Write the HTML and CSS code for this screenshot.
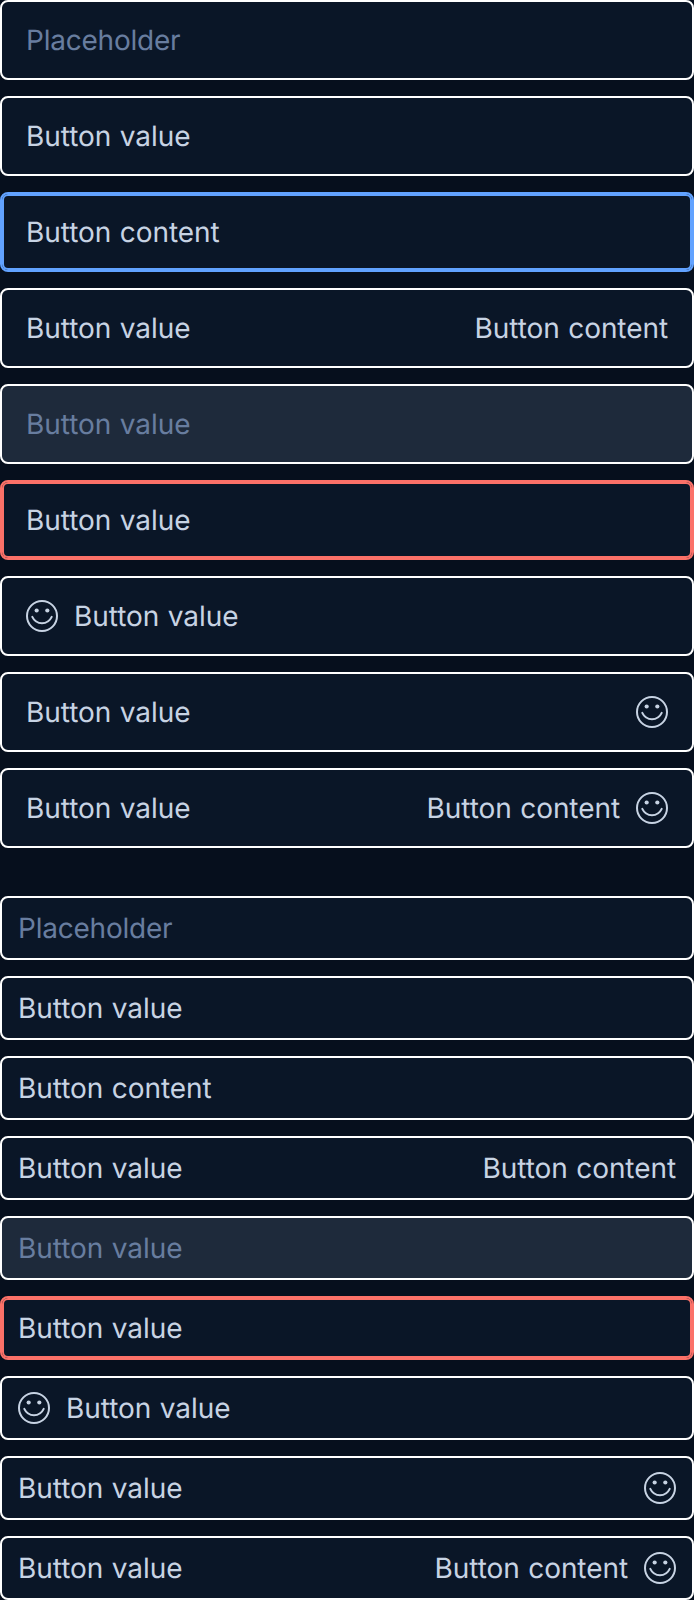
FILE: index.html
```html
<!DOCTYPE html>
<html lang="en">
<head>
<meta charset="utf-8">
<title>Input buttons</title>
<link rel="stylesheet" href="styles.css">
</head>
<body>
<svg class="sprite" aria-hidden="true">
  <symbol id="smile" viewBox="0 0 32 32">
    <circle cx="16" cy="16" r="15" fill="none" stroke="currentColor" stroke-width="2"/>
    <circle cx="10.67" cy="10.5" r="2.1" fill="currentColor"/>
    <circle cx="21.33" cy="10.5" r="2.1" fill="currentColor"/>
    <path d="M6.3 16.9C8.2 20.9 11.8 23.3 16 23.3s7.8-2.4 9.7-6.4" fill="none" stroke="currentColor" stroke-width="2" stroke-linecap="round"/>
  </symbol>
</svg>
<main class="page">
  <section class="group">
    <button class="field placeholder"><span>Placeholder</span></button>
    <button class="field"><span>Button value</span></button>
    <button class="field focused"><span>Button content</span></button>
    <button class="field"><span class="value">Button value</span><span>Button content</span></button>
    <button class="field disabled" disabled><span>Button value</span></button>
    <button class="field invalid"><span>Button value</span></button>
    <button class="field"><svg class="icon"><use href="#smile"/></svg><span>Button value</span></button>
    <button class="field"><span class="value">Button value</span><svg class="icon"><use href="#smile"/></svg></button>
    <button class="field"><span class="value">Button value</span><span>Button content</span><svg class="icon"><use href="#smile"/></svg></button>
  </section>
  <section class="group small">
    <button class="field placeholder"><span>Placeholder</span></button>
    <button class="field"><span>Button value</span></button>
    <button class="field"><span>Button content</span></button>
    <button class="field"><span class="value">Button value</span><span>Button content</span></button>
    <button class="field disabled" disabled><span>Button value</span></button>
    <button class="field invalid"><span>Button value</span></button>
    <button class="field"><svg class="icon"><use href="#smile"/></svg><span>Button value</span></button>
    <button class="field"><span class="value">Button value</span><svg class="icon"><use href="#smile"/></svg></button>
    <button class="field"><span class="value">Button value</span><span>Button content</span><svg class="icon"><use href="#smile"/></svg></button>
  </section>
</main>
</body>
</html>
```
FILE: styles.css
```css
* {
  box-sizing: border-box;
}

body {
  margin: 0;
  background: #060f1d;
}

.sprite {
  display: none;
}

.page {
  display: flex;
  flex-direction: column;
  gap: 48px;
}

.group {
  display: flex;
  flex-direction: column;
  gap: 16px;
}

.field {
  display: flex;
  align-items: center;
  gap: 16px;
  width: 100%;
  height: 80px;
  margin: 0;
  padding: 0 24px;
  border: 2px solid #fff;
  border-radius: 8px;
  background: #0a1627;
  color: #c7d3e3;
  font: 400 28px/40px Inter, sans-serif;
  letter-spacing: -0.07px;
  word-spacing: 0.8px;
  text-rendering: geometricPrecision;
  text-align: left;
}

.small .field {
  height: 64px;
  padding: 0 16px;
}

.value {
  flex: 1;
}

.icon {
  flex: none;
  width: 32px;
  height: 32px;
}

.field.placeholder,
.field.disabled {
  color: #687d9f;
}

.field.placeholder {
  letter-spacing: -0.22px;
}

.field.disabled {
  background: #1e2a3b;
}

.field.focused {
  border-color: #61a2ff;
  box-shadow: inset 0 0 0 2px #61a2ff;
}

.field.invalid {
  border-color: #fb7168;
  box-shadow: inset 0 0 0 2px #fb7168;
}
```
